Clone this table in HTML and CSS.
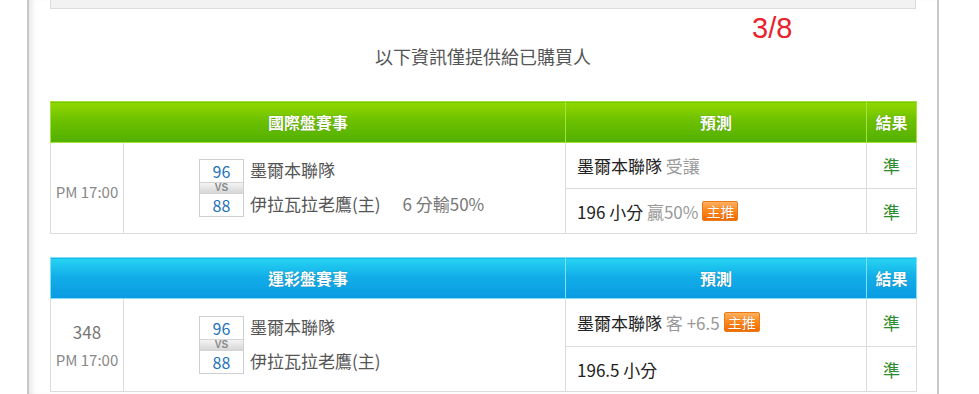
FILE: index.html
```html
<!DOCTYPE html>
<html lang="zh-Hant">
<head>
<meta charset="utf-8">
<title>預測</title>
<link rel="stylesheet" href="styles.css">
</head>
<body>
<div class="frame">
  <div class="topbox"></div>
  <div class="pager">3/8</div>
  <div class="notice">以下資訊僅提供給已購買人</div>

  <table class="games green">
    <colgroup><col class="c1"><col class="c2"><col class="c3"><col class="c4"></colgroup>
    <thead>
      <tr><th colspan="2">國際盤賽事</th><th>預測</th><th>結果</th></tr>
    </thead>
    <tbody>
      <tr class="r1">
        <td class="time single" rowspan="2"><div class="clock">PM 17:00</div></td>
        <td class="match" rowspan="2">
          <div class="matchbox">
            <div class="scorebox">
              <div class="score">96</div>
              <div class="vs">VS</div>
              <div class="score">88</div>
            </div>
            <div class="names">
              <div class="team">墨爾本聯隊</div>
              <div class="team">伊拉瓦拉老鷹(主)<span class="line">6 分輸50%</span></div>
            </div>
          </div>
        </td>
        <td class="pick">墨爾本聯隊 <span class="muted">受讓</span></td>
        <td class="res">準</td>
      </tr>
      <tr class="r2">
        <td class="pick">196 小分 <span class="muted">贏50%</span><span class="badge">主推</span></td>
        <td class="res">準</td>
      </tr>
    </tbody>
  </table>

  <table class="games blue">
    <colgroup><col class="c1"><col class="c2"><col class="c3"><col class="c4"></colgroup>
    <thead>
      <tr><th colspan="2">運彩盤賽事</th><th>預測</th><th>結果</th></tr>
    </thead>
    <tbody>
      <tr class="r1b">
        <td class="time" rowspan="2"><div class="num">348</div><div class="clock">PM 17:00</div></td>
        <td class="match" rowspan="2">
          <div class="matchbox">
            <div class="scorebox">
              <div class="score">96</div>
              <div class="vs">VS</div>
              <div class="score">88</div>
            </div>
            <div class="names">
              <div class="team">墨爾本聯隊</div>
              <div class="team">伊拉瓦拉老鷹(主)</div>
            </div>
          </div>
        </td>
        <td class="pick">墨爾本聯隊 <span class="muted">客 +6.5</span><span class="badge">主推</span></td>
        <td class="res">準</td>
      </tr>
      <tr class="r2">
        <td class="pick">196.5 小分</td>
        <td class="res">準</td>
      </tr>
    </tbody>
  </table>
</div>
</body>
</html>
```

FILE: styles.css
```css
html, body {
  margin: 0;
  padding: 0;
  background: #fff;
  height: 100%;
  overflow: hidden;
}
body {
  font-family: "Noto Sans CJK TC", sans-serif;
  color: #333;
}
.frame {
  margin-left: 27px;
  width: 866px;
  min-height: 100%;
  padding: 0 21px;
  border-left: 2px solid #c8c8c8;
  border-right: 2px solid #c8c8c8;
  box-shadow: inset 6px 0 6px -4px rgba(0,0,0,0.12);
  box-sizing: content-box;
}
.topbox {
  height: 8px;
  background: #f2f2f2;
  border: 1px solid #dcdcdc;
  border-top: 0;
}
.pager {
  height: 36px;
  line-height: 39px;
  padding-left: 752px;
  margin-left: -50px;
  font-family: "Liberation Sans", sans-serif;
  font-size: 29px;
  color: #e8232e;
}
.notice {
  height: 22px;
  line-height: 22px;
  text-align: center;
  font-size: 18px;
  color: #555;
  margin-bottom: 34px;
}
.games {
  width: 866px;
  border-collapse: collapse;
  table-layout: fixed;
  margin-bottom: 23px;
}
.c1 { width: 73px; }
.c2 { width: 442px; }
.c3 { width: 301px; }
.c4 { width: 50px; }
.games th {
  height: 40px;
  padding: 0;
  font-size: 16px;
  font-weight: bold;
  color: #fff;
  text-align: center;
  text-shadow: 0 0 1px rgba(0,0,0,0.35);
}
.green th {
  background: linear-gradient(#92d800 0%, #6cc000 45%, #52b000 100%);
  border: 1px solid #a6e23e;
}
.blue th {
  background: linear-gradient(#26d4f2 0%, #12aee8 45%, #0a9ae2 100%);
  border: 1px solid #80e0f6;
}
.games td {
  border: 1px solid #dcdcdc;
  padding: 0;
  font-size: 17px;
}
.r1 { height: 46px; }
.r2 { height: 45px; }
.r1b { height: 48px; }
.time {
  text-align: center;
  vertical-align: middle;
  color: #888;
}
.time.single {
  padding-top: 8px;
}
.clock {
  font-size: 15px;
  line-height: 20px;
}
.num {
  font-size: 17px;
  line-height: 22px;
  color: #777;
  margin-bottom: 7px;
}
.match {
  vertical-align: middle;
}
.matchbox {
  display: flex;
  align-items: flex-start;
  padding-left: 75px;
}
.scorebox {
  width: 43px;
  border: 1px solid #cfcfcf;
  text-align: center;
}
.score {
  height: 22px;
  line-height: 22px;
  font-size: 16px;
  color: #1b72b8;
}
.vs {
  height: 10px;
  line-height: 10px;
  font-size: 10px;
  font-weight: bold;
  color: #8a8a8a;
  background: linear-gradient(#f4f4f4, #d6d6d6);
  border-top: 1px solid #d4d4d4;
  border-bottom: 1px solid #d4d4d4;
  font-family: "Liberation Sans", sans-serif;
}
.names {
  margin-left: 6px;
  padding-top: 0;
  display: flex;
  flex-direction: column;
  gap: 12px;
}
.team {
  height: 22px;
  line-height: 22px;
  color: #555;
  white-space: nowrap;
}
.line {
  margin-left: 22px;
  color: #777;
}
.pick {
  padding-left: 11px !important;
  color: #222;
  white-space: nowrap;
}
.muted {
  color: #999;
}
.badge {
  display: inline-block;
  margin-left: 4px;
  padding: 0 3px;
  height: 18px;
  line-height: 18px;
  font-size: 14px;
  color: #fff;
  background: linear-gradient(#ffb060 0%, #ff8a1e 45%, #f06c00 100%);
  border: 1px solid #e87a1a;
  border-radius: 2px;
  vertical-align: 2px;
  text-shadow: 0 0 1px rgba(120,40,0,0.5);
}
.res {
  text-align: center;
  color: #2a8c2a;
}
```
